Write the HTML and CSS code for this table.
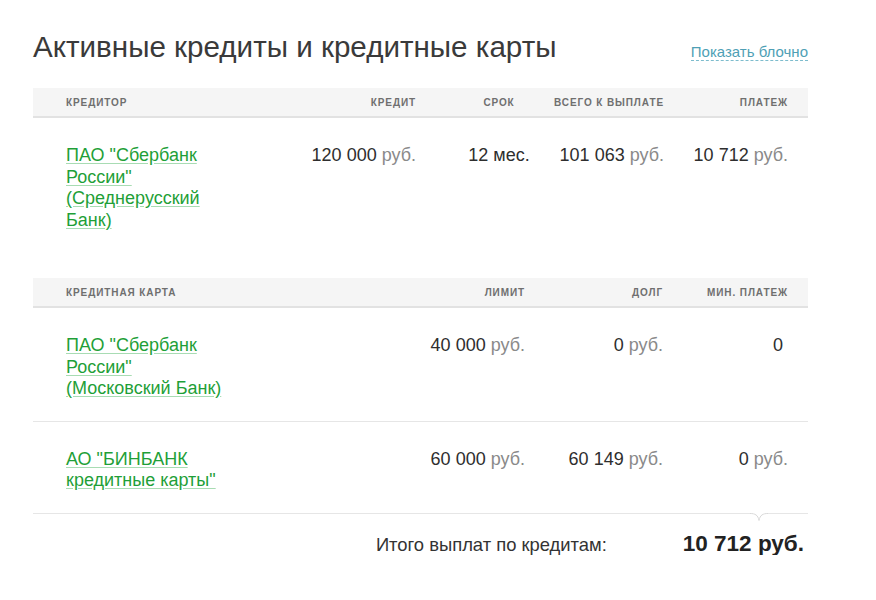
FILE: index.html
```html
<!DOCTYPE html>
<html lang="ru">
<head>
<meta charset="utf-8">
<title>Активные кредиты и кредитные карты</title>
<link rel="stylesheet" href="styles.css">
</head>
<body>
<div class="page">
  <div class="topbar">
    <h1 class="title">Активные кредиты и кредитные карты</h1>
    <a class="toggle" href="#">Показать блочно</a>
  </div>

  <div class="table t-loans">
    <div class="grid thead">
      <div class="c-name">Кредитор</div>
      <div class="c-num">Кредит</div>
      <div class="c-term">Срок</div>
      <div class="c-num">Всего к выплате</div>
      <div class="c-num">Платеж</div>
    </div>
    <div class="grid row">
      <div class="c-name"><div class="name"><a href="#">ПАО "Сбербанк России" (Среднерусский Банк)</a></div></div>
      <div class="c-num val">120 000 <span class="cur">руб.</span></div>
      <div class="c-term val">12 мес.</div>
      <div class="c-num val">101 063 <span class="cur">руб.</span></div>
      <div class="c-num val">10 712 <span class="cur">руб.</span></div>
    </div>
  </div>

  <div class="table t-cards">
    <div class="grid thead">
      <div class="c-name">Кредитная карта</div>
      <div class="c-num">Лимит</div>
      <div class="c-num">Долг</div>
      <div class="c-num">Мин. платеж</div>
    </div>
    <div class="grid row sep">
      <div class="c-name"><div class="name"><a href="#">ПАО "Сбербанк России" (Московский Банк)</a></div></div>
      <div class="c-num val">40 000 <span class="cur">руб.</span></div>
      <div class="c-num val">0 <span class="cur">руб.</span></div>
      <div class="c-num val">0&nbsp;</div>
    </div>
    <div class="grid row sep">
      <div class="c-name"><div class="name"><a href="#">АО "БИНБАНК кредитные карты"</a></div></div>
      <div class="c-num val">60 000 <span class="cur">руб.</span></div>
      <div class="c-num val">60 149 <span class="cur">руб.</span></div>
      <div class="c-num val">0 <span class="cur">руб.</span></div>
    </div>
  </div>

  <div class="total">
    <svg class="notch" width="18" height="9" viewBox="0 0 18 9" aria-hidden="true">
      <path d="M0 0.5 C5 0.5 8 2 9 7.5 C10 2 13 0.5 18 0.5" fill="none" stroke="#d9d9d9" stroke-width="1"/>
    </svg>
    <span class="total-label">Итого выплат по кредитам:</span>
    <span class="total-value">10 712 руб.</span>
  </div>
</div>
</body>
</html>
```

FILE: styles.css
```css
body {
  margin: 0;
  background: #ffffff;
  color: #333333;
  font-family: "Liberation Sans", Arial, sans-serif;
}

.page {
  width: 775px;
  margin-left: 33px;
}

.topbar {
  display: flex;
  justify-content: space-between;
  align-items: baseline;
  height: 88px;
  padding-top: 30px;
  box-sizing: border-box;
}

.title {
  margin: 0;
  font-size: 29.6px;
  line-height: 34px;
  font-weight: normal;
  color: #3a3a3a;
}

.toggle {
  font-size: 15px;
  line-height: 17px;
  color: #4f9fb5;
  text-decoration: none;
  border-bottom: 1px dashed #7dbccd;
}

.grid {
  display: grid;
  padding: 0 20px 0 33px;
}

.t-loans .grid {
  grid-template-columns: 200px 150px 138px 110px 124px;
}

.t-cards .grid {
  grid-template-columns: 260px 199px 138px 125px;
}

.thead {
  height: 28px;
  align-items: center;
  background: #f5f5f5;
  border-bottom: 2px solid #e2e2e2;
  font-size: 10px;
  font-weight: bold;
  letter-spacing: 0.9px;
  text-transform: uppercase;
  color: #6f6f6f;
}

.c-num {
  text-align: right;
  white-space: nowrap;
}

.c-term {
  text-align: center;
  padding-left: 28px;
  white-space: nowrap;
}

.row {
  align-items: start;
  padding-top: 27px;
  padding-bottom: 21px;
  line-height: 21.5px;
}

.t-loans {
  margin-bottom: 26px;
}

.sep {
  border-bottom: 1px solid #e6e6e6;
}

.name {
  max-width: 170px;
  font-size: 18px;
}

.name a {
  color: #1f9f38;
  text-decoration: underline;
  text-decoration-color: #a8dcb3;
  text-underline-offset: 2px;
}

.val {
  font-size: 18px;
  color: #2e2e2e;
}

.cur {
  color: #8a8a8a;
}

.total {
  position: relative;
  display: flex;
  justify-content: flex-end;
  align-items: baseline;
  gap: 76px;
  padding: 19px 4px 0 0;
  line-height: 21.5px;
}

.notch {
  position: absolute;
  top: -1px;
  right: 40px;
  background: #ffffff;
}

.total-label {
  font-size: 18.4px;
  color: #333333;
}

.total-value {
  font-size: 22.5px;
  font-weight: bold;
  color: #222222;
}
```
